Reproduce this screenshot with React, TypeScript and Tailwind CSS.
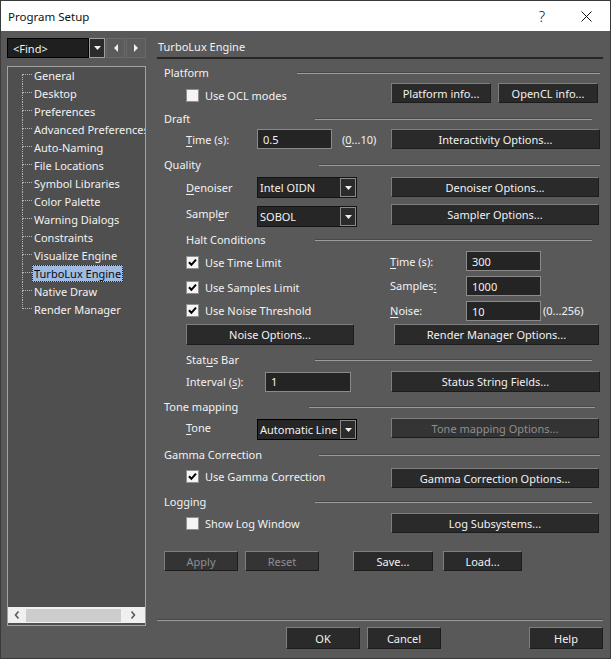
import React from "react";

type Kids = { children?: React.ReactNode; className?: string };

const U = ({ children }: Kids) => (
  <span className="underline underline-offset-[2px] decoration-1">{children}</span>
);

const Check = ({ checked }: { checked?: boolean }) => (
  <span className="w-[13px] h-[13px] shrink-0 border border-[#8f8f8f] bg-[#f4f4f4] flex items-center justify-center">
    {checked && (
      <svg width="9" height="9" viewBox="0 0 9 9">
        <path d="M1 4.2 L3.4 6.8 L8 1.6" stroke="#000" strokeWidth="2" fill="none" />
      </svg>
    )}
  </span>
);

const Btn = ({ children, className = "", disabled }: Kids & { disabled?: boolean }) => (
  <div
    className={`flex items-center justify-center shrink-0 whitespace-nowrap border border-t-[#7e7e7e] border-l-[#7e7e7e] border-r-[#1c1c1c] border-b-[#1c1c1c] ${
      disabled ? "bg-[#343434] text-[#8e8e8e]" : "bg-[#2a2a2a] text-[#f2f2f2]"
    } ${className}`}
  >
    {children}
  </div>
);

const Field = ({ value, className = "" }: { value: string; className?: string }) => (
  <div
    className={`h-[20px] shrink-0 bg-[#242424] border border-[#8a8a8a] flex items-center pl-[5px] text-[#f2f2f2] ${className}`}
  >
    {value}
  </div>
);

const DownTri = () => (
  <svg width="7" height="4" viewBox="0 0 7 4">
    <path d="M0 0 H7 L3.5 4 Z" fill="#f0f0f0" />
  </svg>
);

const Combo = ({ value, focused }: { value: string; focused?: boolean }) => (
  <div
    className={`flex w-[100px] h-[21px] shrink-0 border ${
      focused ? "border-black" : "border-[#141414]"
    } bg-[#262626]`}
  >
    <div className="flex-1 min-w-0 flex items-center pl-[2px] overflow-hidden whitespace-nowrap text-[#f2f2f2]">
      {value}
    </div>
    <div className="w-[16px] shrink-0 border border-[#8a8a8a] bg-[#2b2b2b] flex items-center justify-center">
      <DownTri />
    </div>
  </div>
);

const Heading = ({
  label,
  labelClass,
  lineClass,
  className = "",
}: {
  label: React.ReactNode;
  labelClass: string;
  lineClass: string;
  className?: string;
}) => (
  <div className={`flex items-center h-[18px] ${className}`}>
    <span className={`shrink-0 whitespace-nowrap ${labelClass}`}>{label}</span>
    <div className={`h-[2px] mt-[2px] border-t border-[#474747] bg-[#9c9c9c] ${lineClass}`} />
  </div>
);

const treeItems = [
  "General",
  "Desktop",
  "Preferences",
  "Advanced Preferences",
  "Auto-Naming",
  "File Locations",
  "Symbol Libraries",
  "Color Palette",
  "Warning Dialogs",
  "Constraints",
  "Visualize Engine",
  "TurboLux Engine",
  "Native Draw",
  "Render Manager",
];

const Tree = () => (
  <div className="mt-[8px] w-[139px] h-[560px] border border-[#a3a3a3] bg-[#4f4f4f] flex flex-col">
    <div className="flex-1 overflow-hidden pl-[14px] -mt-[1px]">
      {treeItems.map((item, i) => {
        const first = i === 0;
        const last = i === treeItems.length - 1;
        const selected = item === "TurboLux Engine";
        return (
          <div key={item} className="flex h-[18px]">
            <div className="w-[10px] shrink-0 flex flex-col">
              <div
                className={`h-[9px] border-b border-dotted border-[#b5b5b5] ${
                  first ? "" : "border-l"
                }`}
              />
              <div className={`h-[9px] border-dotted border-[#b5b5b5] ${last ? "" : "border-l"}`} />
            </div>
            <div className="flex items-center min-w-0">
              <span
                className={`whitespace-nowrap h-[17px] flex items-center pl-[1px] pr-[1px] ${
                  selected
                    ? "bg-[#9fbbe2] text-[#0a0a14] border border-dotted border-[#222]"
                    : "text-[#f2f2f2] border border-transparent"
                }`}
              >
                {item}
              </span>
            </div>
          </div>
        );
      })}
    </div>
    <div className="h-[16px] mb-[2px] bg-[#f0f0f0] flex items-center">
      <div className="w-[18px] flex items-center justify-center">
        <svg width="6" height="8" viewBox="0 0 6 8">
          <path d="M4.5 0.5 L1.5 4 L4.5 7.5" stroke="#5a5a5a" strokeWidth="1.6" fill="none" />
        </svg>
      </div>
      <div className="w-[95px] h-[13px] bg-[#cdcdcd]" />
      <div className="flex-1 flex items-center justify-center">
        <svg width="6" height="8" viewBox="0 0 6 8">
          <path d="M1.5 0.5 L4.5 4 L1.5 7.5" stroke="#5a5a5a" strokeWidth="1.6" fill="none" />
        </svg>
      </div>
    </div>
  </div>
);

const FindBar = () => (
  <div className="flex h-[20px]">
    <div className="w-[82px] bg-[#1f1f1f] border border-black flex items-center pl-[5px] text-[#f2f2f2]">
      &lt;Find&gt;
    </div>
    <div className="w-[16px] border border-[#a0a0a0] bg-[#2b2b2b] flex items-center justify-center">
      <DownTri />
    </div>
    <div className="ml-[1px] w-[19px] border border-[#6a6a6a] bg-[#5c5c5c] flex items-center justify-center">
      <svg width="4" height="8" viewBox="0 0 4 8">
        <path d="M4 0 V8 L0 4 Z" fill="#f0f0f0" />
      </svg>
    </div>
    <div className="ml-[1px] w-[20px] border border-[#6a6a6a] bg-[#5c5c5c] flex items-center justify-center">
      <svg width="4" height="8" viewBox="0 0 4 8">
        <path d="M0 0 V8 L4 4 Z" fill="#f0f0f0" />
      </svg>
    </div>
  </div>
);

export default function App() {
  return (
    <div className="w-[611px] h-[659px] border border-[#3a3a3a] bg-[#595959] flex flex-col overflow-hidden font-['Noto_Sans',sans-serif] text-[11px] text-[#f2f2f2] leading-[15px]">
      {/* title bar */}
      <div className="h-[30px] shrink-0 bg-white flex items-center text-[#111] text-[11.5px]">
        <span className="pl-[7px]">Program Setup</span>
        <span className="ml-auto w-[20px] text-center text-[15px] font-light">?</span>
        <div className="ml-[28px] mr-[18px] w-[12px] flex items-center justify-center">
          <svg width="11" height="11" viewBox="0 0 11 11">
            <path d="M0.5 0.5 L10.5 10.5 M10.5 0.5 L0.5 10.5" stroke="#111" strokeWidth="1" />
          </svg>
        </div>
      </div>

      <div className="flex flex-1">
        {/* navigation */}
        <div className="w-[156px] shrink-0 pl-[6px] pt-[7px]">
          <FindBar />
          <Tree />
        </div>

        {/* settings page */}
        <div className="flex-1 pt-[6px]">
          <div className="w-[446px] h-[22px] border-b-2 border-[#262626] flex items-center pl-[1px] pb-[1px]">
            TurboLux Engine
          </div>

          <Heading className="mt-[4px]" label="Platform" labelClass="w-[140px] pl-[7px]" lineClass="w-[303px]" />
          <div className="flex h-[20px] mt-[2px]">
            <div className="w-[234px] pl-[29px] pt-[4px] flex items-center">
              <Check />
              <span className="ml-[6px]">Use OCL modes</span>
            </div>
            <Btn className="w-[100px]">Platform info...</Btn>
            <Btn className="ml-[7px] w-[100px]">OpenCL info...</Btn>
          </div>

          <Heading className="mt-[6px]" label="Draft" labelClass="w-[158px] pl-[7px]" lineClass="w-[277px]" />
          <div className="flex h-[20px] mt-[2px]">
            <div className="w-[234px] flex items-center">
              <span className="w-[100px] pl-[29px]">
                <U>T</U>ime (s):
              </span>
              <Field value="0.5" className="w-[75px]" />
              <span className="ml-[10px]">
                (<U>0</U>...10)
              </span>
            </div>
            <Btn className="w-[209px]">Interactivity Options...</Btn>
          </div>

          <Heading className="mt-[6px]" label="Quality" labelClass="w-[162px] pl-[7px]" lineClass="w-[281px]" />
          <div className="flex h-[21px] mt-[4px]">
            <div className="w-[234px] flex items-center">
              <span className="w-[100px] pl-[29px]">
                <U>D</U>enoiser
              </span>
              <Combo value="Intel OIDN" />
            </div>
            <Btn className="w-[208px] h-[20px]">Denoiser Options...</Btn>
          </div>
          <div className="flex h-[22px] mt-[6px]">
            <div className="w-[234px] flex items-start">
              <span className="w-[100px] pl-[29px] mt-[2px]">
                Sampl<U>e</U>r
              </span>
              <div className="mt-[2px]">
                <Combo value="SOBOL" />
              </div>
            </div>
            <Btn className="w-[208px] h-[21px]">Sampler Options...</Btn>
          </div>

          <Heading className="mt-[4px]" label="Halt Conditions" labelClass="w-[158px] pl-[29px]" lineClass="w-[277px]" />
          <div className="flex h-[20px] mt-[3px] items-center">
            <div className="w-[233px] pl-[29px] pt-[3px] flex items-center">
              <Check checked />
              <span className="ml-[6px]">Use Time Limit</span>
            </div>
            <span className="w-[76px]">
              <U>T</U>ime (s):
            </span>
            <Field value="300" className="w-[75px]" />
          </div>
          <div className="flex h-[20px] mt-[5px] items-center">
            <div className="w-[233px] pl-[29px] pt-[2px] flex items-center">
              <Check checked />
              <span className="ml-[6px]">Use Samples Limit</span>
            </div>
            <span className="w-[76px] -mt-[2px]">
              Samples<U>:</U>
            </span>
            <Field value="1000" className="w-[75px]" />
          </div>
          <div className="flex h-[20px] mt-[5px] items-center">
            <div className="w-[233px] pl-[29px] -mt-[1px] flex items-center">
              <Check checked />
              <span className="ml-[6px]">Use Noise Threshold</span>
            </div>
            <span className="w-[76px] -mt-[2px]">
              <U>N</U>oise:
            </span>
            <Field value="10" className="w-[75px]" />
            <span className="ml-[2px] -mt-[2px]">(0...256)</span>
          </div>
          <div className="flex h-[21px] mt-[3px]">
            <Btn className="ml-[29px] w-[168px]">Noise Options...</Btn>
            <Btn className="ml-[40px] w-[205px]">Render Manager Options...</Btn>
          </div>

          <Heading
            className="mt-[5px]"
            label={
              <>
                Stat<U>u</U>s Bar
              </>
            }
            labelClass="w-[158px] pl-[29px]"
            lineClass="w-[277px]"
          />
          <div className="flex h-[21px] mt-[3px]">
            <div className="w-[234px] flex items-center">
              <span className="w-[108px] pl-[29px]">
                Interval (<U>s</U>):
              </span>
              <Field value="1" className="w-[86px] h-[19px]" />
            </div>
            <Btn className="w-[209px]">Status String Fields...</Btn>
          </div>

          <Heading className="mt-[5px]" label="Tone mapping" labelClass="w-[152px] pl-[7px]" lineClass="w-[286px]" />
          <div className="flex h-[21px] mt-[3px]">
            <div className="w-[234px] flex items-start">
              <span className="w-[100px] pl-[29px] mt-[2px]">
                <U>T</U>one
              </span>
              <div className="mt-[1px]">
                <Combo value="Automatic Line" focused />
              </div>
            </div>
            <Btn className="w-[208px] h-[20px]" disabled>
              Tone mapping Options...
            </Btn>
          </div>

          <Heading className="mt-[6px]" label="Gamma Correction" labelClass="w-[162px] pl-[7px]" lineClass="w-[281px]" />
          <div className="flex h-[20px] mt-[5px]">
            <div className="w-[234px] pl-[29px] -mt-[3px] flex items-center">
              <Check checked />
              <span className="ml-[6px]">Use Gamma Correction</span>
            </div>
            <Btn className="w-[208px]">Gamma Correction Options...</Btn>
          </div>

          <Heading className="mt-[4px]" label="Logging" labelClass="w-[158px] pl-[7px]" lineClass="w-[277px]" />
          <div className="flex h-[20px] mt-[3px]">
            <div className="w-[234px] pl-[29px] flex items-center">
              <Check />
              <span className="ml-[6px]">Show Log Window</span>
            </div>
            <Btn className="w-[208px]">Log Subsystems...</Btn>
          </div>

          <div className="flex h-[20px] mt-[18px]">
            <Btn className="ml-[7px] w-[74px]" disabled>
              Apply
            </Btn>
            <Btn className="ml-[7px] w-[74px]" disabled>
              Reset
            </Btn>
            <Btn className="ml-[34px] w-[80px]">Save...</Btn>
            <Btn className="ml-[10px] w-[79px]">Load...</Btn>
          </div>

          <div className="mt-[48px] w-[446px] h-[2px] border-t border-[#474747] bg-[#9c9c9c]" />

          <div className="flex h-[22px] mt-[6px]">
            <Btn className="ml-[129px] w-[74px] border-t-[#1c1c1c] border-l-[#1c1c1c]">OK</Btn>
            <Btn className="ml-[7px] w-[74px]">Cancel</Btn>
            <Btn className="ml-[88px] w-[74px]">Help</Btn>
          </div>
        </div>
      </div>
    </div>
  );
}
